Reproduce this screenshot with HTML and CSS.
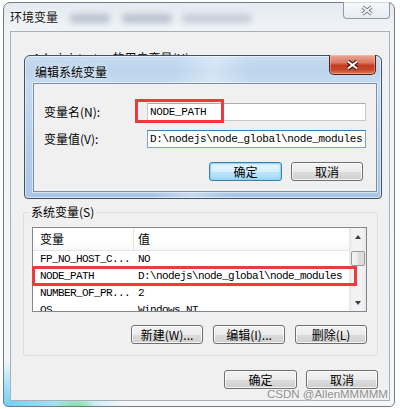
FILE: index.html
```html
<!DOCTYPE html>
<html lang="zh-CN">
<head>
<meta charset="utf-8">
<title>环境变量</title>
<link rel="stylesheet" href="styles.css">
</head>
<body>
<div class="screen">
  <div class="win">
    <div class="win-title">
      <span class="win-title-text">环境变量</span>
      <span class="blur blur-1"></span>
      <span class="blur blur-2"></span>
      <span class="blur blur-3"></span>
    </div>
    <div class="win-close">
      <svg width="14" height="11" viewBox="0 0 14 11"><path d="M2.5 2 L11.5 9 M11.5 2 L2.5 9" stroke="#7b7f86" stroke-width="3.6" fill="none"/><path d="M2.5 2 L11.5 9 M11.5 2 L2.5 9" stroke="#f5f6f8" stroke-width="1.6" fill="none"/></svg>
    </div>
    <div class="client">
      <div class="ghost-label">Administrator 的用户变量(U)</div>
      <fieldset class="group">
        <legend>系统变量(S)</legend>
        <div class="list">
          <div class="list-body">
            <div class="list-head">
              <div class="head-cell first">变量</div>
              <div class="head-cell">值</div>
            </div>
            <div class="row"><span class="c1">FP_NO_HOST_C...</span><span class="c2">NO</span></div>
            <div class="row"><span class="c1">NODE_PATH</span><span class="c2">D:\nodejs\node_global\node_modules</span></div>
            <div class="row"><span class="c1">NUMBER_OF_PR...</span><span class="c2">2</span></div>
            <div class="row"><span class="c1">OS</span><span class="c2">Windows_NT</span></div>
          </div>
          <div class="scroll">
            <div class="sb-btn"><span class="arrow-up"></span></div>
            <div class="thumb"></div>
            <div class="sb-space"></div>
            <div class="sb-btn"><span class="arrow-down"></span></div>
          </div>
        </div>
        <div class="btn-row">
          <div class="btn w72">新建(W)...</div>
          <div class="btn w72">编辑(I)...</div>
          <div class="btn w72">删除(L)</div>
        </div>
      </fieldset>
      <div class="footer">
        <div class="btn w73">确定</div>
        <div class="btn w72">取消</div>
      </div>
    </div>
  </div>

  <div class="dlg">
    <div class="dlg-title">编辑系统变量</div>
    <div class="dlg-close">
      <svg width="15" height="12" viewBox="0 0 15 12"><path d="M3 2.5 L12 9.5 M12 2.5 L3 9.5" stroke="#4a120b" stroke-width="4.2" fill="none"/><path d="M3 2.5 L12 9.5 M12 2.5 L3 9.5" stroke="#ffffff" stroke-width="2.2" fill="none"/></svg>
    </div>
    <div class="dlg-client">
      <div class="field">
        <span class="field-label">变量名(N):</span>
        <div class="input">NODE_PATH</div>
      </div>
      <div class="field">
        <span class="field-label">变量值(V):</span>
        <div class="input focus">D:\nodejs\node_global\node_modules</div>
      </div>
      <div class="dlg-btns">
        <div class="btn default w73">确定</div>
        <div class="btn w72">取消</div>
      </div>
    </div>
  </div>

  <div class="mark mark-1"></div>
  <div class="mark mark-2"></div>
  <div class="watermark">CSDN @AllenMMMMM</div>
</div>
</body>
</html>
```
FILE: styles.css
```css
body {
  margin: 0;
  background: #ffffff;
  font-family: "Noto Sans CJK SC", "Noto Sans", sans-serif;
  font-size: 12px;
  color: #000;
}

.screen {
  position: relative;
  width: 400px;
  height: 409px;
  overflow: hidden;
}

/* outer window */
.win {
  position: relative;
  margin: 2px 0 0 3px;
  width: 392px;
  height: 405px;
  box-sizing: border-box;
  border: 1px solid #737d88;
  border-radius: 7px 7px 5px 5px;
  padding: 0 4px 5px 6px;
  display: flex;
  flex-direction: column;
  background:
    radial-gradient(ellipse 22px 8px at 72px 100%, rgba(110, 220, 120, 0.75), rgba(110, 220, 120, 0)),
    radial-gradient(ellipse 120px 45px at 0 100%, #6fcff0 0%, rgba(120, 215, 245, 0.6) 50%, rgba(127, 214, 243, 0) 100%),
    linear-gradient(to bottom, #e4eaf0 0px, #f1f4f7 28px, #f4f6f8 100%);
}

.win-title {
  position: relative;
  height: 28px;
  display: flex;
  align-items: center;
}

.win-title-text {
  line-height: 14px;
  color: #111;
  text-shadow: 0 0 6px #fff, 0 0 3px #fff;
  position: relative;
  z-index: 1;
}

.blur {
  position: absolute;
  top: 11px;
  height: 9px;
  border-radius: 4px;
  background: #8d9ab0;
  filter: blur(3px);
  opacity: 0.55;
}
.blur-1 { left: 60px; width: 40px; }
.blur-2 { left: 112px; width: 50px; }
.blur-3 { left: 172px; width: 70px; opacity: 0.4; }

.win-close {
  position: absolute;
  top: -1px;
  right: 4px;
  width: 47px;
  height: 17px;
  box-sizing: border-box;
  border: 1px solid #8f9aa7;
  border-top: 0;
  border-radius: 0 0 4px 4px;
  background: linear-gradient(rgba(255, 255, 255, 0.7), rgba(232, 237, 242, 0.7));
  display: flex;
  align-items: center;
  justify-content: center;
}

.client {
  flex: 1;
  border: 1px solid #a7afb7;
  background: #f0f0f0;
  display: flex;
  flex-direction: column;
}

.ghost-label {
  margin: 19px 0 0 22px;
  line-height: 14px;
  height: 14px;
  white-space: nowrap;
}

/* group box */
.group {
  margin: 140px 11px 0 12px;
  padding: 0 10px 11px 8px;
  border: 1px solid #d5dfe5;
  border-radius: 3px;
  min-width: 0;
}

.group legend {
  margin-left: -3px;
  padding: 0 2px;
  line-height: 14px;
}

.list {
  margin-top: 8px;
  height: 85px;
  box-sizing: border-box;
  border: 1px solid #828790;
  background: #ffffff;
  display: flex;
  overflow: hidden;
}

.list-body {
  flex: 1;
  min-width: 0;
  overflow: hidden;
}

.list-head {
  display: grid;
  grid-template-columns: 101px 1fr;
  height: 23px;
  box-sizing: border-box;
  border-bottom: 1px solid #e5e5e5;
  background: linear-gradient(#ffffff, #ffffff 55%, #f7f8f9 100%);
}

.head-cell {
  display: flex;
  align-items: center;
  padding-left: 4px;
  line-height: 14px;
}
.head-cell.first {
  padding-left: 7px;
  border-right: 1px solid #e5e5e5;
}

.row {
  display: grid;
  grid-template-columns: 101px 1fr;
  height: 17px;
  align-items: center;
  font-family: "Liberation Mono", monospace;
  font-size: 11px;
  letter-spacing: -0.6px;
  line-height: 13px;
  white-space: nowrap;
}
.row .c1 { padding-left: 7px; }
.row .c2 { padding-left: 4px; }

.scroll {
  width: 17px;
  display: flex;
  flex-direction: column;
  align-items: center;
  background: linear-gradient(to right, #e6e6e6, #f3f3f3 25%, #f3f3f3 75%, #e8e8e8);
}

.sb-btn {
  width: 17px;
  height: 17px;
  display: flex;
  align-items: center;
  justify-content: center;
}

.arrow-up {
  width: 0;
  height: 0;
  border-left: 3px solid transparent;
  border-right: 3px solid transparent;
  border-bottom: 4px solid #3d3d3d;
}
.arrow-down {
  width: 0;
  height: 0;
  border-left: 3px solid transparent;
  border-right: 3px solid transparent;
  border-top: 4px solid #3d3d3d;
}

.thumb {
  margin-top: 6px;
  width: 14px;
  height: 15px;
  box-sizing: border-box;
  border: 1px solid #9a9a9a;
  border-radius: 2px;
  background: linear-gradient(to right, #f4f4f4, #ececec 50%, #dcdcdc 51%, #dedede);
}

.sb-space { flex: 1; }

.btn-row {
  display: flex;
  justify-content: flex-end;
  gap: 10px;
  margin-top: 13px;
}

.footer {
  display: flex;
  justify-content: flex-end;
  gap: 9px;
  margin-top: 14px;
  padding-right: 11px;
}

/* buttons */
.btn {
  height: 19px;
  box-sizing: border-box;
  border: 1px solid #707070;
  border-radius: 3px;
  background: linear-gradient(#f3f3f3 0%, #ebebeb 50%, #dddddd 51%, #cfcfcf 100%);
  box-shadow: inset 0 0 0 1px rgba(255, 255, 255, 0.75);
  display: flex;
  align-items: center;
  justify-content: center;
  line-height: 14px;
  white-space: nowrap;
}
.btn.w72 { width: 72px; }
.btn.w73 { width: 73px; }

.btn.default {
  border-color: #3c7fb1;
  background: linear-gradient(#eaf6fd 0%, #d9f0fc 50%, #bee6fd 51%, #a7d9f5 100%);
  box-shadow: inset 0 0 0 1px #8ed7f7, inset 0 0 3px #61c3ee;
}

/* dialog */
.dlg {
  position: absolute;
  left: 24px;
  top: 55px;
  width: 358px;
  height: 144px;
  box-sizing: border-box;
  border: 1px solid #3f5266;
  border-radius: 6px 6px 4px 4px;
  padding: 0 4px 6px 8px;
  display: flex;
  flex-direction: column;
  background:
    linear-gradient(100deg, rgba(255, 255, 255, 0) 40%, rgba(255, 255, 255, 0.35) 50%, rgba(255, 255, 255, 0) 60%),
    linear-gradient(to bottom, #c9ddf1 0, #bcd4ed 14px, #c5dbf0 27px, #b6cfea 60%, #a9c6e6 100%);
  box-shadow: inset 0 0 0 1px rgba(255, 255, 255, 0.55);
}

.dlg-title {
  height: 27px;
  box-sizing: border-box;
  padding: 4px 0 0 2px;
  display: flex;
  align-items: center;
  line-height: 14px;
  text-shadow: 0 0 5px rgba(255, 255, 255, 0.9);
}

.dlg-close {
  position: absolute;
  top: -1px;
  right: 5px;
  width: 47px;
  height: 20px;
  box-sizing: border-box;
  border: 1px solid #5b1d14;
  border-top: 0;
  border-radius: 0 0 5px 5px;
  background: linear-gradient(to bottom, #e9a897 0%, #da7a62 40%, #c33c22 55%, #c8462b 78%, #de7c58 100%);
  box-shadow: inset 0 0 0 1px rgba(255, 205, 195, 0.45);
  display: flex;
  align-items: center;
  justify-content: center;
}

.dlg-client {
  flex: 1;
  border: 1px solid #7f8fa2;
  background: #f0f0f0;
  padding: 19px 10px 10px 10px;
  display: flex;
  flex-direction: column;
  box-shadow: 0 0 0 1px rgba(255, 255, 255, 0.5);
}

.field {
  display: flex;
  align-items: center;
  height: 18px;
}
.field + .field { margin-top: 9px; }

.field-label {
  width: 103px;
  flex: none;
  line-height: 14px;
  white-space: nowrap;
}

.input {
  flex: 1;
  height: 18px;
  box-sizing: border-box;
  border: 1px solid #c5c8ce;
  border-top-color: #abadb3;
  background: #ffffff;
  padding-left: 2px;
  font-family: "Liberation Mono", monospace;
  font-size: 11px;
  letter-spacing: -0.36px;
  line-height: 16px;
  white-space: nowrap;
  overflow: hidden;
}
.input.focus {
  border-color: #7da2ce;
  border-top-color: #3d7bad;
}

.dlg-btns {
  display: flex;
  justify-content: flex-end;
  gap: 9px;
  margin-top: 14px;
  margin-right: 3px;
}

/* annotations */
.mark {
  position: absolute;
  box-sizing: border-box;
  border: 3px solid #ee3a3a;
}
.mark-1 { left: 135px; top: 99px; width: 89px; height: 24px; }
.mark-2 { left: 32px; top: 266px; width: 325px; height: 20px; }

.watermark {
  position: absolute;
  left: 267px;
  top: 388px;
  font-family: "Liberation Sans", sans-serif;
  font-size: 11.5px;
  line-height: 12px;
  color: #8f8f8f;
  text-shadow: 0 0 2px #ffffff;
  white-space: nowrap;
}
```
